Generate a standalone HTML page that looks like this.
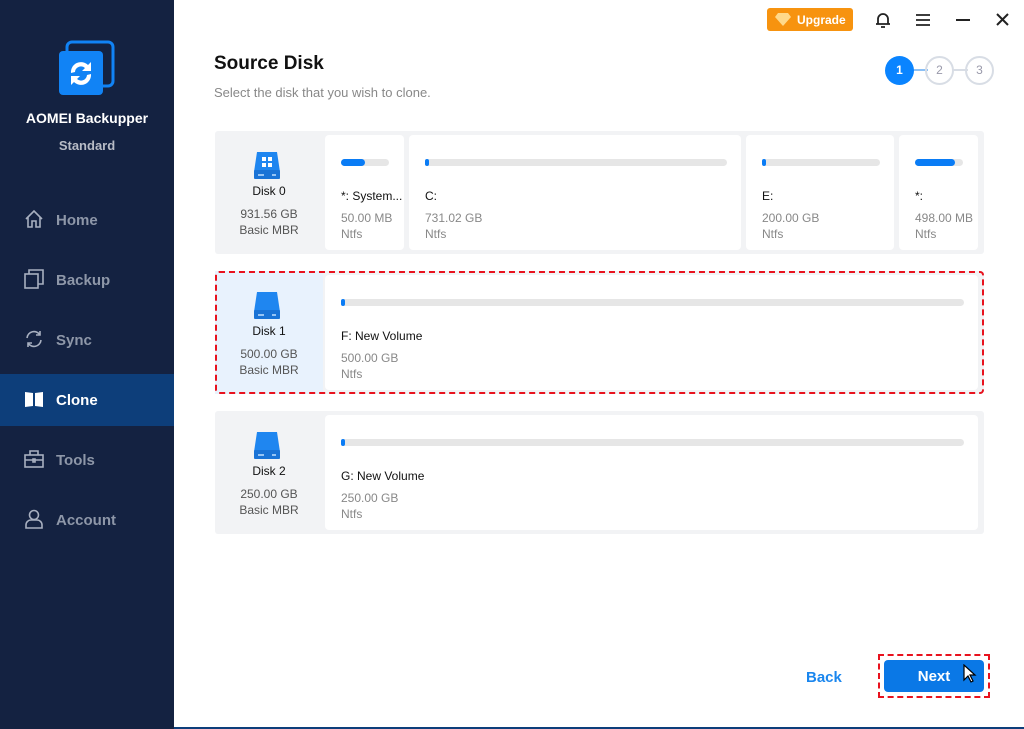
<!DOCTYPE html>
<html><head><meta charset="utf-8"><style>
*{margin:0;padding:0;box-sizing:border-box}
body{width:1024px;height:729px;position:relative;font-family:"Liberation Sans",sans-serif;background:#fff;overflow:hidden}
.side{position:absolute;left:0;top:0;width:174px;height:729px;background:#142241}
.nav{position:absolute;left:0;width:174px;height:52px;color:#8e97a8;font-size:15px;font-weight:bold}
.nav span{position:absolute;left:56px;top:18px}
.nav svg{position:absolute;left:24px;top:15px}
.abs{position:absolute}
.row{position:absolute;left:215px;width:769px;height:123px;background:#f2f3f5;border-radius:3px}
.dl{position:absolute;left:0;top:0;width:108px;height:123px;text-align:center;font-size:12px;color:#555;line-height:16px}
.dl b{display:block;color:#111;font-weight:normal;margin-top:52px;margin-bottom:7px;font-size:12px}
.dl svg{position:absolute;left:37px;top:19px}
.card{position:absolute;top:4px;height:115px;background:#fff;border-radius:4px;font-size:12px;color:#888}
.bar{position:absolute;left:16px;top:24px;height:7px;background:#e6e6e6;border-radius:4px}
.fill{height:7px;background:#0a7cf5;border-radius:4px}
.nm{position:absolute;left:16px;top:54px;color:#111}
.sz{position:absolute;left:16px;top:75px;line-height:16px}
</style></head><body>
<div class="side">
 <svg class="abs" style="left:58px;top:40px" width="58" height="56"><rect x="9" y="2" width="46" height="44" rx="5" fill="none" stroke="#1183f5" stroke-width="3"/><rect x="1" y="11" width="44" height="44" rx="4" fill="#1183f5"/><path d="M13 33a10 10 0 0 1 17-8l3-3v9h-9l3-3a6 6 0 0 0-10 4z M33 34a10 10 0 0 1-17 8l-3 3v-9h9l-3 3a6 6 0 0 0 10-4z" fill="#fff"/></svg>
 <div class="abs" style="left:0;width:174px;top:110px;text-align:center;color:#fff;font-weight:bold;font-size:14px">AOMEI Backupper</div>
 <div class="abs" style="left:0;width:174px;top:138px;text-align:center;color:#b8bcc6;font-weight:bold;font-size:13px">Standard</div>
 <div class="nav" style="top:194px"><svg width="20" height="20" fill="none" stroke="#a8b0c0" stroke-width="1.6"><path d="M2 10L10 2l8 8M4 8v10h4v-6h4v6h4V8"/></svg><span>Home</span></div>
 <div class="nav" style="top:254px"><svg width="20" height="20" fill="none" stroke="#a8b0c0" stroke-width="1.6"><rect x="1" y="5" width="13" height="14"/><path d="M5 5V1h14v14h-5"/></svg><span>Backup</span></div>
 <div class="nav" style="top:314px"><svg width="20" height="20" fill="none" stroke="#a8b0c0" stroke-width="1.6"><path d="M3 9a7 7 0 0 1 13-3M17 11a7 7 0 0 1-13 3M16 2v4h-4M4 18v-4h4"/></svg><span>Sync</span></div>
 <div class="nav" style="top:374px;background:#0d3e7a;color:#fff"><svg width="20" height="20"><path d="M1 3l8 1v13l-8 1z M19 3l-8 1v13l8 1z" fill="#fff"/></svg><span>Clone</span></div>
 <div class="nav" style="top:434px"><svg width="20" height="20" fill="none" stroke="#a8b0c0" stroke-width="1.6"><rect x="1" y="6" width="18" height="12"/><path d="M6 6V2h8v4M1 11h18M9 10h2v3H9z"/></svg><span>Tools</span></div>
 <div class="nav" style="top:494px"><svg width="20" height="20" fill="none" stroke="#a8b0c0" stroke-width="1.6"><circle cx="10" cy="6" r="4.5"/><path d="M2 19v-3a5 5 0 0 1 5-5h6a5 5 0 0 1 5 5v3z"/></svg><span>Account</span></div>
</div>
<div class="abs" style="left:767px;top:8px;width:86px;height:23px;background:#f7930f;border-radius:3px;color:#fff;font-weight:bold;font-size:12px;padding:5px 0 0 30px">Upgrade<svg class="abs" style="left:8px;top:5px" width="16" height="13"><path d="M3 0h10l3 4-8 9-8-9z" fill="#ffd98a"/></svg></div>
<svg class="abs" style="left:875px;top:11px" width="16" height="18" fill="none" stroke="#222" stroke-width="1.8"><path d="M3 13V8a5 5 0 0 1 10 0v5M1 13h14M6 16h4"/></svg>
<svg class="abs" style="left:916px;top:13px" width="14" height="13" stroke="#222" stroke-width="1.8"><path d="M0 2h14M0 7h14M0 12h14"/></svg>
<svg class="abs" style="left:956px;top:19px" width="14" height="2" stroke="#222" stroke-width="2"><path d="M0 1h14"/></svg>
<svg class="abs" style="left:996px;top:13px" width="13" height="13" stroke="#222" stroke-width="2"><path d="M1 1l11 11M12 1L1 12"/></svg>
<div class="abs" style="left:214px;top:53px;font-size:19px;font-weight:bold;color:#111">Source Disk</div>
<div class="abs" style="left:214px;top:85px;font-size:13px;color:#888">Select the disk that you wish to clone.</div>
<div class="abs" style="left:912px;top:69px;width:16px;height:2px;background:#8cc0f5"></div>
<div class="abs" style="left:952px;top:69px;width:16px;height:2px;background:#d8dde5"></div>
<div class="abs" style="left:885px;top:56px;width:29px;height:29px;border-radius:50%;background:#0a84ff;color:#fff;font-size:12px;font-weight:bold;text-align:center;line-height:29px">1</div>
<div class="abs" style="left:925px;top:56px;width:29px;height:29px;border-radius:50%;border:2px solid #d8dde5;color:#99a;font-size:12px;text-align:center;line-height:25px">2</div>
<div class="abs" style="left:965px;top:56px;width:29px;height:29px;border-radius:50%;border:2px solid #d8dde5;color:#99a;font-size:12px;text-align:center;line-height:25px">3</div>

<div class="row" style="top:131px">
 <div class="dl"><svg width="30" height="30"><path d="M5 2h20l3 20H2z" fill="#1f86f0"/><rect x="2" y="20" width="26" height="9" rx="1" fill="#1a73d6"/><path d="M10 7h4v4h-4zM16 7h4v4h-4zM10 13h4v4h-4zM16 13h4v4h-4z" fill="#fff"/><path d="M6 25h6M20 25h4" stroke="#bfe0ff" stroke-width="1.4"/></svg><b>Disk 0</b>931.56 GB<br>Basic MBR</div>
 <div class="card" style="left:110px;width:79px"><div class="bar" style="width:48px"><div class="fill" style="width:24px"></div></div><div class="nm">*: System...</div><div class="sz">50.00 MB<br>Ntfs</div></div>
 <div class="card" style="left:194px;width:332px"><div class="bar" style="width:302px"><div class="fill" style="width:4px"></div></div><div class="nm">C:</div><div class="sz">731.02 GB<br>Ntfs</div></div>
 <div class="card" style="left:531px;width:148px"><div class="bar" style="width:118px"><div class="fill" style="width:4px"></div></div><div class="nm">E:</div><div class="sz">200.00 GB<br>Ntfs</div></div>
 <div class="card" style="left:684px;width:79px"><div class="bar" style="width:48px"><div class="fill" style="width:40px"></div></div><div class="nm">*:</div><div class="sz">498.00 MB<br>Ntfs</div></div>
</div>

<div class="row" style="top:271px">
 <div class="dl" style="background:#e8f2fd"><svg width="30" height="30"><path d="M5 2h20l3 20H2z" fill="#1f86f0"/><rect x="2" y="20" width="26" height="9" rx="1" fill="#1a73d6"/><path d="M6 25h6M20 25h4" stroke="#bfe0ff" stroke-width="1.4"/></svg><b>Disk 1</b>500.00 GB<br>Basic MBR</div>
 <div class="card" style="left:110px;width:653px"><div class="bar" style="width:623px"><div class="fill" style="width:4px"></div></div><div class="nm">F: New Volume</div><div class="sz">500.00 GB<br>Ntfs</div></div>
 <div class="abs" style="left:0;top:0;width:769px;height:123px;border:2px dashed #e8121e;border-radius:4px"></div>
</div>

<div class="row" style="top:411px">
 <div class="dl"><svg width="30" height="30"><path d="M5 2h20l3 20H2z" fill="#1f86f0"/><rect x="2" y="20" width="26" height="9" rx="1" fill="#1a73d6"/><path d="M6 25h6M20 25h4" stroke="#bfe0ff" stroke-width="1.4"/></svg><b>Disk 2</b>250.00 GB<br>Basic MBR</div>
 <div class="card" style="left:110px;width:653px"><div class="bar" style="width:623px"><div class="fill" style="width:4px"></div></div><div class="nm">G: New Volume</div><div class="sz">250.00 GB<br>Ntfs</div></div>
</div>

<div class="abs" style="left:806px;top:669px;font-size:15px;font-weight:bold;color:#1a86ee">Back</div>
<div class="abs" style="left:878px;top:654px;width:112px;height:44px;border:2px dashed #e8121e"></div>
<div class="abs" style="left:884px;top:660px;width:100px;height:32px;background:#0a78e6;border-radius:4px;color:#fff;font-weight:bold;font-size:15px;text-align:center;line-height:33px">Next</div>
<svg class="abs" style="left:963px;top:664px" width="14" height="20"><path d="M1 1v15l4-4 3 6 2-1-3-6h5z" fill="#fff" stroke="#000" stroke-width="1.2"/></svg>
<div class="abs" style="left:174px;top:727px;width:850px;height:2px;background:#0d3e7a"></div>
</body></html>
